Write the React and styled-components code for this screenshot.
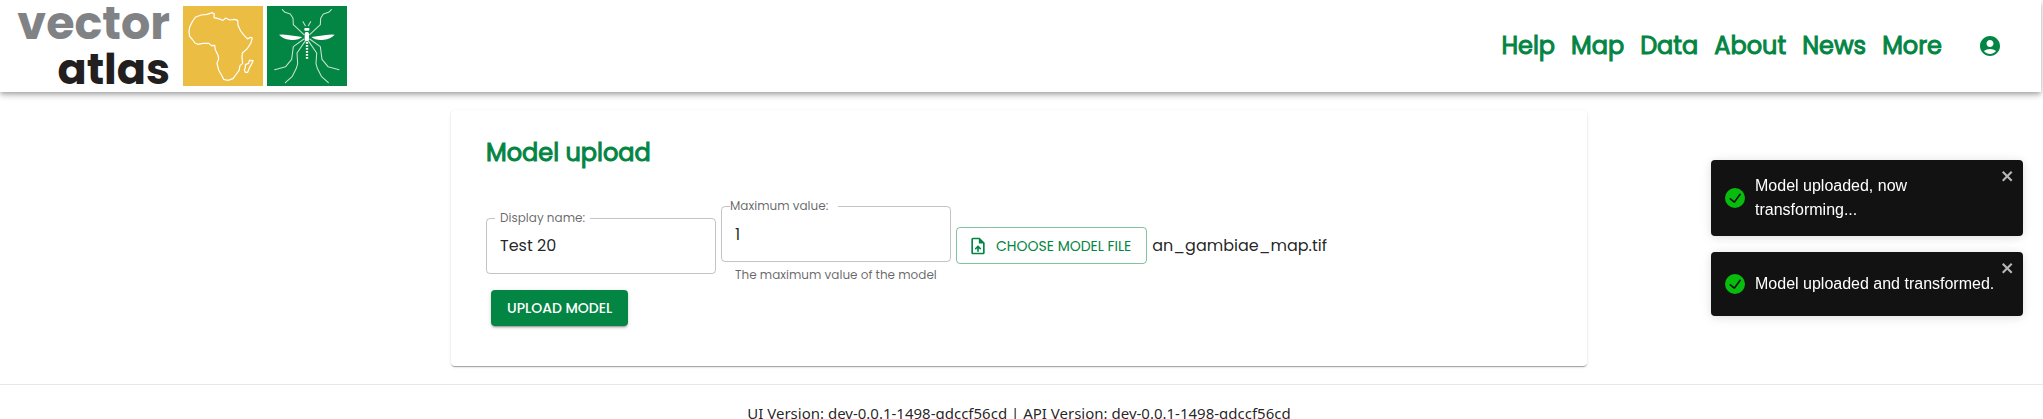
import React from "react";
import styled, { createGlobalStyle, css } from "styled-components";
import { MdAccountCircle, MdUploadFile } from "react-icons/md";

const green = "#038543";
const ui = `Poppins, Inter, "Liberation Sans", sans-serif`;

const GlobalStyle = createGlobalStyle`
  *, *::before, *::after { box-sizing: border-box; }
  html, body { margin: 0; background: #fff; }
  body { overflow: hidden; font-family: ${ui}; color: rgba(0, 0, 0, 0.87); }
`;

const Page = styled.div`
  min-height: 100vh;
  padding-right: 5px;
  display: flex;
  flex-direction: column;
`;

const Header = styled.header`
  display: flex;
  align-items: center;
  justify-content: space-between;
  height: 92px;
  padding: 0 27px 0 18px;
  margin-right: -3px;
  box-shadow: 0 2px 4px -1px rgba(0, 0, 0, 0.2), 0 4px 5px rgba(0, 0, 0, 0.14),
    0 1px 10px rgba(0, 0, 0, 0.12);
`;

const Brand = styled.a`
  display: flex;
  align-items: center;
  gap: 4px;
  text-decoration: none;
`;

const Wordmark = styled.span`
  display: flex;
  flex-direction: column;
  align-items: flex-end;
  width: 152px;
  margin-right: 9px;
  font: 700 46px/46px ${ui};
  color: #808285;
`;

const WordmarkDark = styled.span`
  font-size: 43px;
  color: #231f20;
`;

const Tile = styled.svg`
  display: block;
  width: 80px;
  height: 80px;
  fill: none;
  stroke: #fff;
  stroke-linejoin: round;
  stroke-linecap: round;
  background: ${(p) => p.$bg};
`;

const Nav = styled.nav`
  display: flex;
  align-items: center;
  gap: 16px;
`;

const NavLink = styled.a`
  font-size: 24px;
  line-height: 36px;
  font-weight: 400;
  -webkit-text-stroke: 1px ${green};
  color: ${green};
  text-decoration: none;
`;

const AccountButton = styled.button`
  display: flex;
  margin-left: 8px;
  padding: 12px;
  border: 0;
  background: none;
  color: ${green};
  font-size: 24px;
`;

const Main = styled.main`
  width: 100%;
  max-width: 1136px;
  margin: 18px auto;
`;

const Card = styled.form`
  padding: 25px 35px 40px;
  border-radius: 4px;
  background: #fff;
  box-shadow: 0 2px 1px -1px rgba(0, 0, 0, 0.2), 0 1px 1px rgba(0, 0, 0, 0.14),
    0 1px 3px rgba(0, 0, 0, 0.12);
`;

const Title = styled.h1`
  margin: 0 0 35px;
  font-size: 24px;
  line-height: 36px;
  font-weight: 400;
  -webkit-text-stroke: 1px ${green};
  color: ${green};
`;

const Row = styled.div`
  display: flex;
  align-items: center;
  flex-wrap: wrap;
  gap: 5px;
`;

const Field = styled.div`
  position: relative;
  width: 230px;
`;

const FieldLabel = styled.label`
  position: absolute;
  top: -10px;
  left: 9px;
  padding: ${(p) => (p.$flush ? "0 10px 0 0" : "0 5px")};
  background: #fff;
  font-size: 12px;
  line-height: 20px;
  color: rgba(0, 0, 0, 0.6);
`;

const TextInput = styled.input`
  display: block;
  width: 100%;
  height: 56px;
  padding: 0 13px;
  border: 1px solid rgba(0, 0, 0, 0.23);
  border-radius: 4px;
  background: none;
  font: 400 16px ${ui};
  color: rgba(0, 0, 0, 0.87);
`;

const Helper = styled.p`
  margin: 3px 0 0 14px;
  font-size: 12px;
  line-height: 20px;
  white-space: nowrap;
  color: rgba(0, 0, 0, 0.6);
`;

const buttonBase = css`
  display: inline-flex;
  align-items: center;
  border-radius: 4px;
  font-family: ${ui};
  font-size: 14px;
  line-height: 24px;
  text-transform: uppercase;
`;

const OutlinedButton = styled.button`
  ${buttonBase}
  gap: 8px;
  height: 37px;
  padding: 0 15px 0 11px;
  border: 1px solid rgba(3, 133, 67, 0.5);
  background: none;
  color: ${green};
  font-weight: 400;
`;

const ContainedButton = styled.button`
  ${buttonBase}
  justify-content: center;
  height: 36px;
  margin: 5px 5px 0;
  padding: 0 16px;
  border: 0;
  background: ${green};
  color: #fff;
  font-weight: 500;
  box-shadow: 0 3px 1px -2px rgba(0, 0, 0, 0.2), 0 2px 2px rgba(0, 0, 0, 0.14),
    0 1px 5px rgba(0, 0, 0, 0.12);
`;

const FileName = styled.span`
  font-size: 16px;
  line-height: 24px;
`;

const Footer = styled.footer`
  padding-top: 16px;
  margin-right: -5px;
  padding-right: 5px;
  border-top: 1px solid #e7e7e7;
  text-align: center;
  font: 400 15px/24px "Segoe UI", "Noto Sans", sans-serif;
`;

const Toasts = styled.aside`
  position: fixed;
  top: 160px;
  right: 20px;
  width: 312px;
  display: flex;
  flex-direction: column;
  gap: 16px;
`;

const Toast = styled.div`
  display: flex;
  align-items: flex-start;
  min-height: 64px;
  padding: 8px;
  border-radius: 4px;
  background: #121212;
  color: #fff;
  font: 400 16px/24px "Liberation Sans", Arial, sans-serif;
  box-shadow: 0 1px 10px rgba(0, 0, 0, 0.1), 0 2px 15px rgba(0, 0, 0, 0.05);
`;

const ToastBody = styled.div`
  flex: 1;
  display: flex;
  align-items: center;
  align-self: center;
  gap: 10px;
  padding: 6px;
  margin-right: -2px;
`;

const ToastText = styled.span`
  flex: 1;
  margin-right: ${(p) => (p.$long ? "-8px" : "24px")};
  ${(p) => p.$long && "white-space: nowrap;"}
`;

const CloseButton = styled.button`
  display: flex;
  padding: 0;
  border: 0;
  background: none;
  color: #fff;
  opacity: 0.7;
`;

function Logo() {
  return (
    <Brand href="#" aria-label="vector atlas">
      <Wordmark>
        <span>vector</span>
        <WordmarkDark>atlas</WordmarkDark>
      </Wordmark>
      <Tile $bg="#ebbd43" viewBox="0 0 240 240" strokeWidth="3.6">
        <path d="M55 27L38 33 29 45 20 63 18 77 20 91 27 99 36 111 44 115 60 112 78 112 85 119 95 118 97 131 105 148 107 158 102 172 107 192 117 210 122 220 135 223 150 218 158 207 168 194 171 179 179 172 177 155 178 141 192 129 203 112 208 96 202 94 194 99 184 89 173 75 165 58 164 43 155 40 140 42 128 36 120 43 106 38 93 35 94 24 88 20 72 25Z" />
        <path d="M210 164L199 163 197 172 187 176 187 185 184 191 187 199 194 199 200 184 205 176Z" />
      </Tile>
      <Tile $bg={green} viewBox="0 0 240 240" strokeWidth="3.2">
        <g stroke="#c5e3d2">
          <path d="M46 11L54 19 70 24 78 37 79 56 111 86M193 11L185 19 169 24 161 37 160 56 128 86" />
          <path d="M111 99L79 122 74 160 56 182 23 191M128 99L160 122 165 160 183 182 216 191" />
          <path d="M114 106L90 141 92 173 88 187 76 211 55 230M125 106L149 141 147 173 151 187 163 211 184 230" />
          <path d="M108 47L115 59M131 47L124 59" />
        </g>
        <g fill="#fff" stroke="none">
          <path d="M36 86Q48 84 62 87L106 93Q92 104 68 101 49 99 36 86ZM203 86Q191 84 177 87L133 93Q147 104 171 101 190 99 203 86Z" />
          <rect x="112" y="66" width="15" height="8" rx="2" />
          <rect x="113" y="78" width="13" height="28" rx="5" />
        </g>
        <path d="M120 108V160" strokeWidth="7" strokeDasharray="5 4" style={{ strokeLinecap: "butt" }} />
      </Tile>
    </Brand>
  );
}

function Notice({ children, long }) {
  return (
    <Toast role="alert">
      <ToastBody>
        <svg width="20" height="20" viewBox="0 0 24 24" fill="#07bc0c" aria-hidden="true">
          <path d="M12 0a12 12 0 1012 12A12.014 12.014 0 0012 0zm6.927 8.2l-6.845 9.289a1.011 1.011 0 01-1.43.188l-4.888-3.908a1 1 0 111.25-1.562l4.076 3.261 6.227-8.451a1 1 0 111.61 1.183z" />
        </svg>
        <ToastText $long={long}>{children}</ToastText>
      </ToastBody>
      <CloseButton type="button" aria-label="close">
        <svg width="14" height="16" viewBox="0 0 14 16" fill="currentColor" aria-hidden="true">
          <path d="M7.71 8.23l3.75 3.75-1.48 1.48-3.75-3.75-3.75 3.75L1 11.98l3.75-3.75L1 4.48 2.48 3l3.75 3.75L9.98 3l1.48 1.48-3.75 3.75z" />
        </svg>
      </CloseButton>
    </Toast>
  );
}

export default function App() {
  return (
    <>
      <GlobalStyle />
      <Page>
        <Header>
          <Logo />
          <Nav>
            {["Help", "Map", "Data", "About", "News", "More"].map((item) => (
              <NavLink key={item} href="#">
                {item}
              </NavLink>
            ))}
            <AccountButton type="button" aria-label="Account">
              <MdAccountCircle />
            </AccountButton>
          </Nav>
        </Header>
        <Main>
          <Card onSubmit={(e) => e.preventDefault()}>
            <Title>Model upload</Title>
            <Row>
              <Field>
                <TextInput id="display-name" defaultValue="Test 20" />
                <FieldLabel htmlFor="display-name">Display name:</FieldLabel>
              </Field>
              <Field>
                <TextInput id="max-value" defaultValue="1" aria-describedby="max-help" />
                <FieldLabel htmlFor="max-value" $flush>
                  Maximum value:
                </FieldLabel>
                <Helper id="max-help">The maximum value of the model</Helper>
              </Field>
              <OutlinedButton type="button">
                <MdUploadFile size={20} />
                Choose model file
              </OutlinedButton>
              <FileName>an_gambiae_map.tif</FileName>
            </Row>
            <ContainedButton type="submit">Upload model</ContainedButton>
          </Card>
        </Main>
        <Footer>
          UI Version: dev-0.0.1-1498-gdccf56cd | API Version: dev-0.0.1-1498-gdccf56cd
        </Footer>
      </Page>
      <Toasts>
        <Notice>Model uploaded, now transforming...</Notice>
        <Notice long>Model uploaded and transformed.</Notice>
      </Toasts>
    </>
  );
}
